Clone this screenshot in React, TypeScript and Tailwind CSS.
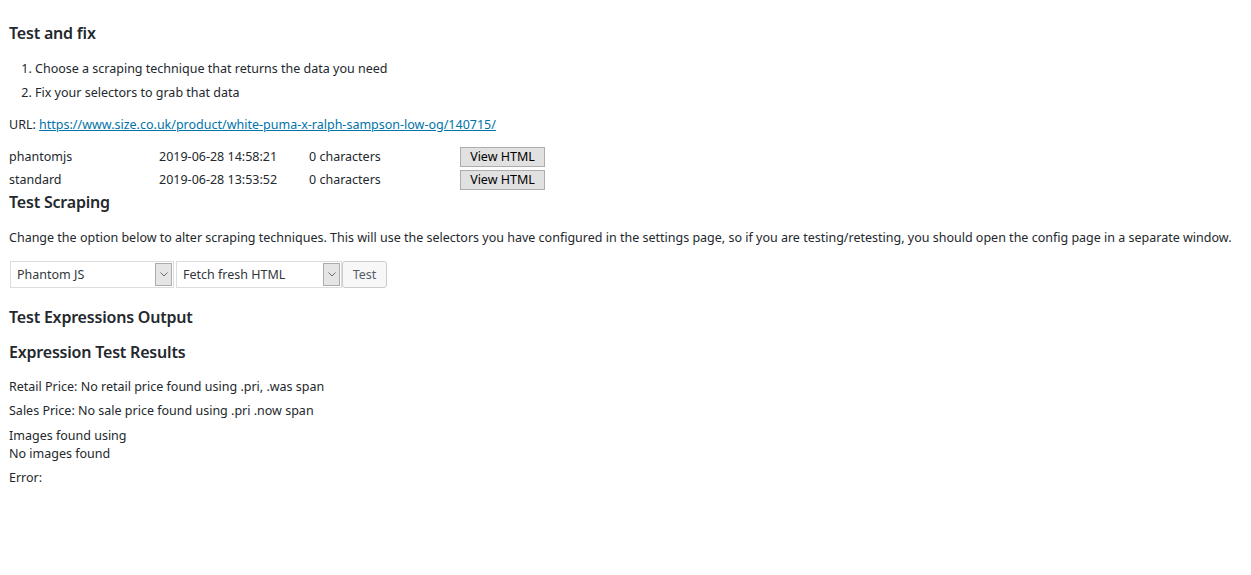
import React from "react";

const font = { fontFamily: '"Noto Sans", "Open Sans", sans-serif' };

function Select({ label, width, className = "" }: { label: string; width: string; className?: string }) {
  return (
    <div className={`flex h-[27px] ${width} border border-[#dddddd] bg-white ${className}`}>
      <div className="flex flex-1 items-center pl-[6px] text-[12.5px] text-[#32373c]">{label}</div>
      <div className="m-[1px] flex w-[17px] items-center justify-center border border-[#acacac] bg-[#e5e5e5]">
        <svg width="8" height="5" viewBox="0 0 8 5" fill="none">
          <path d="M0.5 0.5 L4 4 L7.5 0.5" stroke="#6d6d6d" strokeWidth="1" />
        </svg>
      </div>
    </div>
  );
}

export default function App() {
  return (
    <div className="min-h-[575px] w-[1251px] bg-white pl-[9px] text-[12.5px] leading-[1.4] text-[#23282d]" style={font}>
      <h2 className="pt-[22px] text-[16px] font-semibold leading-[22px] tracking-[-0.2px]">Test and fix</h2>
      <ol className="mt-[13px] list-decimal pl-[26px]">
        <li className="h-[24px] leading-[24px]">Choose a scraping technique that returns the data you need</li>
        <li className="h-[24px] leading-[24px]">Fix your selectors to grab that data</li>
      </ol>
      <p className="mt-[8px] h-[24px] leading-[24px]">
        URL: <a className="text-[#0073aa] underline" href="#">https://www.size.co.uk/product/white-puma-x-ralph-sampson-low-og/140715/</a>
      </p>
      <div className="mt-[9px] flex flex-col">
        {[
          ["phantomjs", "2019-06-28 14:58:21"],
          ["standard", "2019-06-28 13:53:52"],
        ].map(([n, d], i) => (
          <div key={n} className={`flex h-[22px] items-center ${i === 1 ? "mt-[1px]" : ""}`}>
            <div className="w-[150px]">{n}</div>
            <div className="w-[150px]">{d}</div>
            <div className="w-[151px]">0 characters</div>
            <button className="h-[20px] w-[85px] border border-[#adadad] bg-[#e1e1e1] text-[12.5px] leading-[18px] text-[#000]">View HTML</button>
          </div>
        ))}
      </div>
      <h2 className="mt-[-1px] text-[16px] font-semibold leading-[24px] tracking-[-0.2px]">Test Scraping</h2>
      <p className="mt-[12px] leading-[24px]">
        Change the option below to alter scraping techniques. This will use the selectors you have configured in the settings page, so if you are testing/retesting, you should open the config page in a separate window.
      </p>
      <div className="mt-[11px] flex items-start pl-[1px]">
        <Select label="Phantom JS" width="w-[164px]" />
        <Select label="Fetch fresh HTML" width="w-[166px]" className="ml-[2px]" />
        <button className="h-[27px] w-[45px] rounded-[3px] border border-[#cccccc] bg-[#f7f7f7] text-[12.5px] text-[#555d66]">Test</button>
      </div>
      <h2 className="mt-[17px] text-[16px] font-semibold leading-[24px] tracking-[-0.2px]">Test Expressions Output</h2>
      <h2 className="mt-[11px] text-[16px] font-semibold leading-[24px] tracking-[-0.2px]">Expression Test Results</h2>
      <p className="mt-[11px] leading-[24px]">Retail Price: No retail price found using .pri, .was span</p>
      <p className="leading-[24px]">Sales Price: No sale price found using .pri .now span</p>
      <p className="mt-[4px] leading-[18px]">Images found using</p>
      <p className="leading-[18px]">No images found</p>
      <p className="mt-[6px] leading-[18px]">Error:</p>
    </div>
  );
}
